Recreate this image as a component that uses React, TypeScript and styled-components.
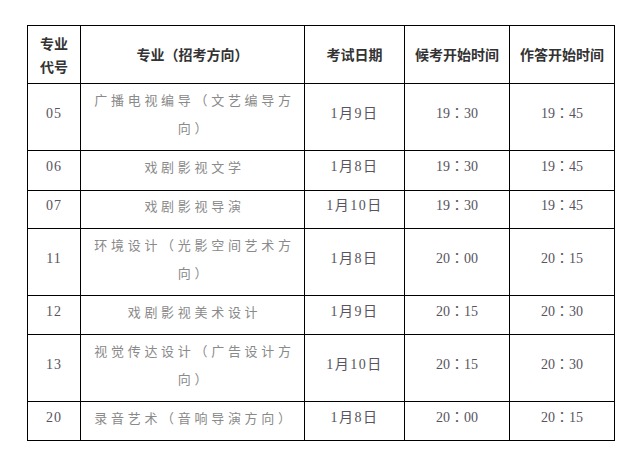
import React from 'react';
import styled, { createGlobalStyle } from 'styled-components';

const GlobalStyle = createGlobalStyle`
  html, body {
    margin: 0;
    padding: 0;
    background: #fff;
  }
`;

const Page = styled.div`
  padding: 25px 0 0 27px;
`;

const Table = styled.table`
  border-collapse: collapse;
  table-layout: fixed;
  width: 588px;
`;

const HeadCell = styled.th`
  border: 1px solid #000;
  padding: 0 6px;
  height: 57px;
  font-family: "Noto Sans CJK SC", sans-serif;
  font-size: 14px;
  font-weight: 700;
  line-height: 23px;
  color: #333;
  text-align: center;
  vertical-align: middle;
`;

const Row = styled.tr<{ $h: number }>`
  height: ${({ $h }) => $h}px;
`;

const Cell = styled.td`
  border: 1px solid #000;
  padding: 0 0 7px;
  text-align: center;
  vertical-align: middle;
  font-family: "Liberation Serif", "Noto Sans CJK TC", serif;
  font-size: 14px;
  line-height: 28px;
  color: #585460;
`;

const CodeCell = styled(Cell)`
  letter-spacing: 1px;
`;

const NameCell = styled(Cell)`
  padding: 0 8px 7px 12px;
  font-family: "Noto Sans CJK SC", sans-serif;
  font-size: 13px;
  letter-spacing: 3.7px;
  color: #8a8a8a;
`;

const DateCell = styled(Cell)`
  letter-spacing: 1.5px;
`;

interface Exam {
  code: string;
  name: string;
  date: string;
  wait: string;
  start: string;
  h: number;
}

const exams: Exam[] = [
  { code: '05', name: '广播电视编导（文艺编导方向）', date: '1月9日', wait: '19：30', start: '19：45', h: 67 },
  { code: '06', name: '戏剧影视文学', date: '1月8日', wait: '19：30', start: '19：45', h: 40 },
  { code: '07', name: '戏剧影视导演', date: '1月10日', wait: '19：30', start: '19：45', h: 38 },
  { code: '11', name: '环境设计（光影空间艺术方向）', date: '1月8日', wait: '20：00', start: '20：15', h: 67 },
  { code: '12', name: '戏剧影视美术设计', date: '1月9日', wait: '20：15', start: '20：30', h: 39 },
  { code: '13', name: '视觉传达设计（广告设计方向）', date: '1月10日', wait: '20：15', start: '20：30', h: 67 },
  { code: '20', name: '录音艺术（音响导演方向）', date: '1月8日', wait: '20：00', start: '20：15', h: 39 },
];

export default function App() {
  return (
    <Page>
      <GlobalStyle />
      <Table>
        <colgroup>
          <col style={{ width: 53 }} />
          <col style={{ width: 224 }} />
          <col style={{ width: 100 }} />
          <col style={{ width: 105 }} />
          <col style={{ width: 105 }} />
        </colgroup>
        <thead>
          <tr>
            <HeadCell>专业<br />代号</HeadCell>
            <HeadCell>专业（招考方向）</HeadCell>
            <HeadCell>考试日期</HeadCell>
            <HeadCell>候考开始时间</HeadCell>
            <HeadCell>作答开始时间</HeadCell>
          </tr>
        </thead>
        <tbody>
          {exams.map((e) => (
            <Row key={e.code} $h={e.h}>
              <CodeCell>{e.code}</CodeCell>
              <NameCell>{e.name}</NameCell>
              <DateCell>{e.date}</DateCell>
              <Cell>{e.wait}</Cell>
              <Cell>{e.start}</Cell>
            </Row>
          ))}
        </tbody>
      </Table>
    </Page>
  );
}
